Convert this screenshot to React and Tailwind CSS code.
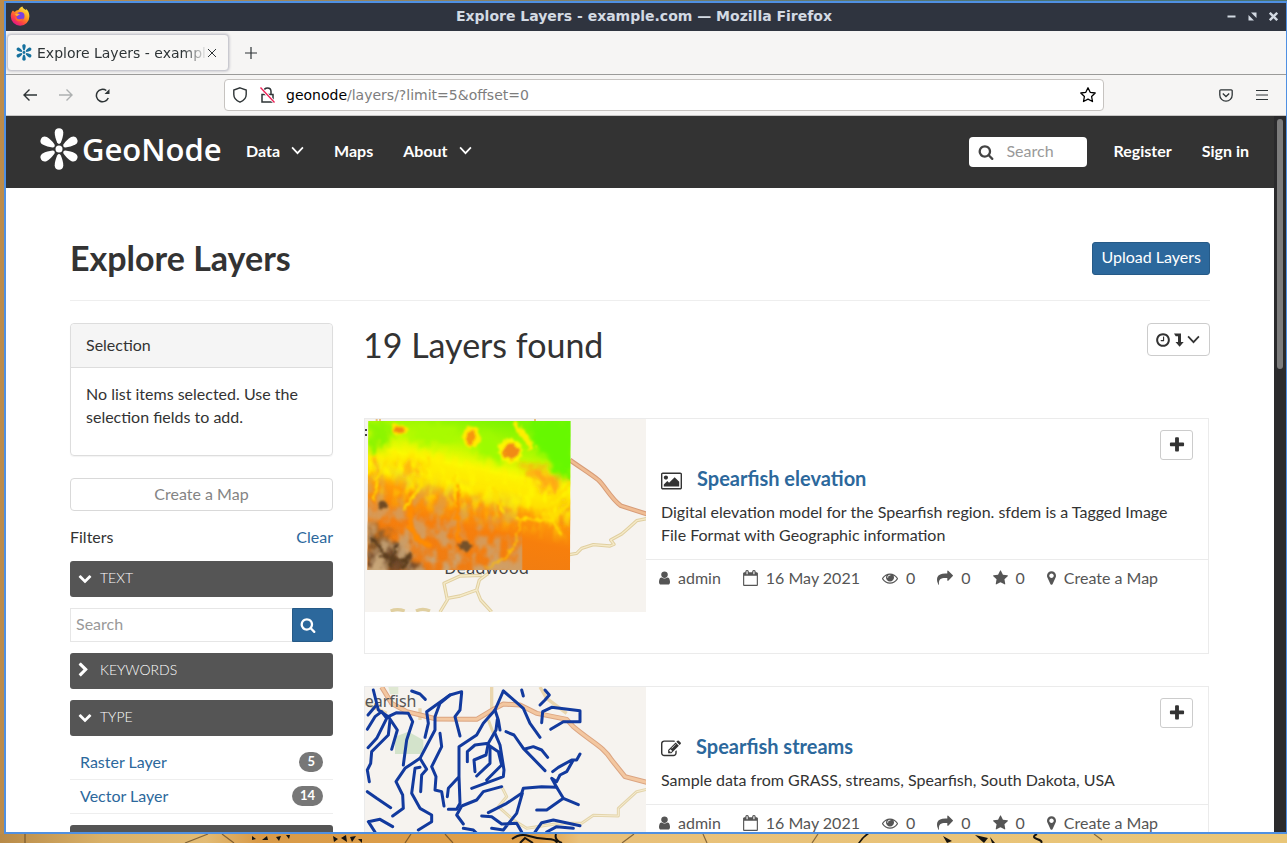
import React from 'react';

const ICONS = {
  search: ['0 0 1792 1792', 'M1216 832q0-185-131.5-316.5t-316.5-131.5-316.5 131.5-131.5 316.5 131.5 316.5 316.5 131.5 316.5-131.5 131.5-316.5zm512 832q0 52-38 90t-90 38q-54 0-90-38l-343-342q-179 124-399 124-143 0-273.5-55.5t-225-150-150-225-55.5-273.5 55.5-273.5 150-225 225-150 273.5-55.5 273.5 55.5 225 150 150 225 55.5 273.5q0 220-124 399l343 343q37 37 37 90z'],
  user: ['256 0 1280 1792', 'M1536 1399q0 109-62.5 187t-150.5 78h-854q-88 0-150.5-78t-62.5-187q0-85 8.5-160.5t31.5-152 58.5-131 94-89 134.5-34.5q131 128 313 128t313-128q76 0 134.5 34.5t94 89 58.5 131 31.5 152 8.5 160.5zm-256-887q0 159-112.5 271.5t-271.5 112.5-271.5-112.5-112.5-271.5 112.5-271.5 271.5-112.5 271.5 112.5 112.5 271.5z'],
  calendar: ['64 0 1664 1792', 'M192 1664h1408v-1024h-1408v1024zm384-1216v-288q0-14-9-23t-23-9h-64q-14 0-23 9t-9 23v288q0 14 9 23t23 9h64q14 0 23-9t9-23zm768 0v-288q0-14-9-23t-23-9h-64q-14 0-23 9t-9 23v288q0 14 9 23t23 9h64q14 0 23-9t9-23zm384-64v1280q0 52-38 90t-90 38h-1408q-52 0-90-38t-38-90v-1280q0-52 38-90t90-38h128v-96q0-66 47-113t113-47h64q66 0 113 47t47 113v96h384v-96q0-66 47-113t113-47h64q66 0 113 47t47 113v96h128q52 0 90 38t38 90z'],
  eye: ['0 0 1792 1792', 'M1664 960q-152-236-381-353 61 104 61 225 0 185-131.5 316.5t-316.5 131.5-316.5-131.5-131.5-316.5q0-121 61-225-229 117-381 353 133 205 333.5 326.5t434.5 121.5 434.5-121.5 333.5-326.5zm-720-384q0-20-14-34t-34-14q-125 0-214.5 89.5t-89.5 214.5q0 20 14 34t34 14 34-14 14-34q0-86 61-147t147-61q20 0 34-14t14-34zm848 384q0 34-20 69-140 230-376.5 368.5t-499.5 138.5-499.5-139-376.5-368q-20-35-20-69t20-69q140-229 376.5-368t499.5-139 499.5 139 376.5 368q20 35 20 69z'],
  share: ['0 0 1792 1792', 'M1792 640q0 26-19 45l-512 512q-19 19-45 19t-45-19-19-45v-256h-224q-98 0-175.5 6t-154 21.5-133 42.5-105.5 69.5-80 101-48.5 138.5-17.5 181q0 55 5 123 0 6 2.5 23.5t2.5 26.5q0 15-8.5 25t-23.5 10q-16 0-28-17-7-9-13-22t-13.5-30-10.5-24q-127-285-127-451 0-199 53-333 162-403 875-403h224v-256q0-26 19-45t45-19 45 19l512 512q19 19 19 45z'],
  star: ['64 0 1664 1792', 'M1728 647q0 22-26 48l-363 354 86 500q1 7 1 20 0 21-10.5 35.5t-30.5 14.5q-19 0-40-12l-449-236-449 236q-22 12-40 12-21 0-31.5-14.5t-10.5-35.5q0-6 2-20l86-500-364-354q-25-27-25-48 0-37 56-46l502-73 225-455q19-41 49-41t49 41l225 455 502 73q56 9 56 46z'],
  marker: ['384 0 1024 1792', 'M1152 640q0-106-75-181t-181-75-181 75-75 181 75 181 181 75 181-75 75-181zm256 0q0 109-33 179l-364 774q-16 33-47.5 52t-67.5 19-67.5-19-46.5-52l-365-774q-33-70-33-179 0-212 150-362t362-150 362 150 150 362z'],
  plus: ['0 0 1792 1792', 'M1600 736v192q0 40-28 68t-68 28h-416v416q0 40-28 68t-68 28h-192q-40 0-68-28t-28-68v-416h-416q-40 0-68-28t-28-68v-192q0-40 28-68t68-28h416v-416q0-40 28-68t68-28h192q40 0 68 28t28 68v416h416q40 0 68 28t28 68z'],
  picture: ['-64 0 1920 1792', 'M576 576q0 80-56 136t-136 56-136-56-56-136 56-136 136-56 136 56 56 136zm1024 384v448h-1408v-192l320-320 160 160 512-512zm96-704h-1600q-13 0-22.5 9.5t-9.5 22.5v1216q0 13 9.5 22.5t22.5 9.5h1600q13 0 22.5-9.5t9.5-22.5v-1216q0-13-9.5-22.5t-22.5-9.5zm160 32v1216q0 66-47 113t-113 47h-1600q-66 0-113-47t-47-113v-1216q0-66 47-113t113-47h1600q66 0 113 47t47 113z'],
  edit: ['0 0 1792 1792', 'M888 1184l116-116-152-152-116 116v56h96v96h56zm440-720q-16-16-33 1l-350 350q-17 17-1 33t33-1l350-350q17-17 1-33zm80 594v190q0 119-84.5 203.5t-203.5 84.5h-832q-119 0-203.5-84.5t-84.5-203.5v-832q0-119 84.5-203.5t203.5-84.5h832q63 0 117 25 15 7 18 23 3 17-9 29l-49 49q-14 14-32 8-23-6-45-6h-832q-66 0-113 47t-47 113v832q0 66 47 113t113 47h832q66 0 113-47t47-113v-126q0-13 9-22l64-64q15-15 35-7t20 29zm-96-738l288 288-672 672h-288v-288zm444 132l-92 92-288-288 92-92q28-28 68-28t68 28l152 152q28 28 28 68t-28 68z'],
  clock: ['128 0 1536 1792', 'M1024 544v448q0 14-9 23t-23 9h-320q-14 0-23-9t-9-23v-64q0-14 9-23t23-9h224v-352q0-14 9-23t23-9h64q14 0 23 9t9 23zm416 352q0-148-73-273t-198-198-273-73-273 73-198 198-73 273 73 273 198 198 273 73 273-73 198-198 73-273zm224 0q0 209-103 385.5t-279.5 279.5-385.5 103-385.5-103-279.5-279.5-103-385.5 103-385.5 279.5-279.5 385.5-103 385.5 103 279.5 279.5 103 385.5z'],
  down: ['0 0 1792 1792', 'M1683 808l-742 741q-19 19-45 19t-45-19l-742-741q-19-19-19-45.5t19-45.5l166-165q19-19 45-19t45 19l531 531 531-531q19-19 45-19t45 19l166 165q19 19 19 45.5t-19 45.5z'],
  right: ['256 0 1280 1792', 'M1363 877l-742 742q-19 19-45 19t-45-19l-166-166q-19-19-19-45t19-45l531-531-531-531q-19-19-19-45t19-45l166-166q19-19 45-19t45 19l742 742q19 19 19 45t-19 45z'],
};

function Icon({ name, className }) {
  const [box, d] = ICONS[name];
  return (
    <svg viewBox={box} className={'shrink-0 fill-current ' + className} aria-hidden="true">
      <path d={d} />
    </svg>
  );
}

function Caret() {
  return (
    <svg viewBox="0 0 14 10" className="h-[9px] w-[13px] shrink-0" fill="none" stroke="currentColor" strokeWidth="1.9" aria-hidden="true">
      <path d="M1 1.500 7 8l6-6.500" />
    </svg>
  );
}

function Flower({ className }) {
  return (
    <svg viewBox="0 0 40 42" className={className} fill="currentColor" aria-hidden="true">
      <circle cx="20" cy="21" r="3.500" />
      {[0, 60, 120, 180, 240, 300].map((a) => (
        <path key={a} transform={`rotate(${a} 20 21)`} d="M18.100 14.600C16.800 11.500 15.700 8 15.700 4.600 15.700 1.800 17.500.3 20 .3s4.300 1.500 4.300 4.300c0 3.400-1.100 6.900-2.400 10q-1.900 2.600-3.800 0z" />
      ))}
    </svg>
  );
}

function FirefoxIcon() {
  return (
    <svg viewBox="0 0 20 20" className="size-[20px]" aria-hidden="true">
      <defs>
        <linearGradient id="fox" x1="0.85" y1="0.1" x2="0.25" y2="0.95">
          <stop offset="0" stopColor="#ffe83d" />
          <stop offset="0.4" stopColor="#ff9a1f" />
          <stop offset="0.7" stopColor="#ff4a3d" />
          <stop offset="1" stopColor="#e31587" />
        </linearGradient>
      </defs>
      <path d="M3 4.500c.6.900 1.300 1.200 2 1.200.900-.800 2-1.500 3.500-1.700C9 3 10.500 1 12.500.5c0 2 2.700 2.800 3.700 3.800 0-.8-.2-1.200-.5-1.700 2.300 1.700 3.700 4.600 3.700 7.700a9.300 9.300 0 0 1-18.600.2C.7 8 1.500 5.700 3 4.500z" fill="url(#fox)" />
      <circle cx="10.500" cy="10" r="4" fill="#7b41e0" />
      <path d="M5 8c2-1 3.500-.5 5 .6-1.500.3-2 1-3 1.700C6.500 10 5.500 9 5 8z" fill="#ffb02e" />
      <path d="M5.500 10.500c1 3 4 3.500 7.500 2-1 4-8 4-7.500-2z" fill="#ff6a2b" />
    </svg>
  );
}

function Browser() {
  return (
    <div className="shrink-0 font-['DejaVu_Sans',sans-serif]">
      <div className="flex h-7 items-center bg-[#2f343f] px-1 pb-0.5 text-[#d3dae3]">
        <div className="flex flex-1"><FirefoxIcon /></div>
        <div className="text-[14px] font-bold">Explore Layers - example.com — Mozilla Firefox</div>
        <div className="flex flex-1 items-center justify-end gap-3 pr-1">
          <button aria-label="Minimize">
            <svg viewBox="0 0 9 9" className="size-[9px]"><path d="M0.500 3.500h8v2h-8z" fill="currentColor" /></svg>
          </button>
          <button aria-label="Restore">
            <svg viewBox="0 0 9 9" className="size-[9px]" fill="currentColor"><path d="M3 .5H8.500V6zM.5 3 6 8.500H.5z" /></svg>
          </button>
          <button aria-label="Close">
            <svg viewBox="0 0 9 9" className="size-[9px]" stroke="currentColor" strokeWidth="2.400"><path d="m.8.8 7.400 7.400M8.200.8.8 8.200" /></svg>
          </button>
        </div>
      </div>
      <div className="flex h-11 items-center gap-4 border-b border-[#9b9b99] bg-[#f6f5f4] px-px text-[#2e3436]">
        <div className="flex h-[37px] w-[222px] items-center rounded border border-[#c9c9d0] bg-[#f8f7f6] pr-3 pl-2 shadow-[0_0_3px_rgba(90,90,110,0.45)]">
          <Flower className="h-[17px] w-4 shrink-0 text-[#16719e]" />
          <span className="ml-[5px] min-w-0 flex-1 overflow-hidden mask-r-from-85% pt-px text-[14px] whitespace-nowrap">Explore Layers - example.com</span>
          <button aria-label="Close tab">
            <svg viewBox="0 0 8 8" className="size-2" stroke="currentColor" strokeWidth="1"><path d="m0 0 8 8M8 0 0 8" /></svg>
          </button>
        </div>
        <button aria-label="New tab">
          <svg viewBox="0 0 12 12" className="size-3" stroke="currentColor" strokeWidth="1.200"><path d="M6 0v12M0 6h12" /></svg>
        </button>
      </div>
      <div className="flex h-[41px] items-center border-b border-[#c8c7c6] bg-[#f6f5f4] text-[#2e3436]">
        <div className="flex w-[218px] shrink-0 items-center gap-[22px] pl-[17px]">
          <button aria-label="Back">
            <svg viewBox="0 0 14 12" className="h-3 w-[14px]" fill="none" stroke="currentColor" strokeWidth="1.400"><path d="M14 6H1M6.500.5 1 6l5.500 5.500" /></svg>
          </button>
          <button aria-label="Forward" className="text-[#adb0b0]">
            <svg viewBox="0 0 14 12" className="h-3 w-[14px]" fill="none" stroke="currentColor" strokeWidth="1.400"><path d="M0 6h13M7.500.5 13 6l-5.500 5.500" /></svg>
          </button>
          <button aria-label="Reload">
            <svg viewBox="0 0 15 15" className="size-[15px]" fill="none" stroke="currentColor" strokeWidth="1.500"><path d="M11.300 2.500A6.200 6.200 0 1 0 13.300 10" /><path d="M14.500 1v5H9.500z" fill="currentColor" stroke="none" /></svg>
          </button>
        </div>
        <div className="flex h-8 min-w-0 flex-1 items-center rounded border border-[#c6c3c0] bg-white pr-[7px] pl-2">
          <svg viewBox="0 0 14 16" className="mr-[13px] h-4 w-[14px] shrink-0" fill="none" stroke="currentColor" strokeWidth="1.400"><path d="M7 .8 13.200 3v4.500c0 3.500-2.500 6.200-6.200 7.700C3.300 13.700.8 11 .8 7.500V3z" /></svg>
          <svg viewBox="0 0 15 16" className="mr-[11px] h-4 w-[15px] shrink-0" fill="none" stroke="currentColor" strokeWidth="1.500"><path d="M4 6V4.500C4 2.500 5.500 1 7.500 1S11 2.500 11 4.500V7M2 7.500h11v7.500H2z" /><path d="M.5 .5l14 15" stroke="#fff" strokeWidth="3" /><path d="M.5 .5l14 15" stroke="#ee1f55" strokeWidth="1.300" /></svg>
          <div className="min-w-0 flex-1 text-[14px] text-[#7d7d7d]"><span className="text-black">geonode</span>/layers/?limit=5&amp;offset=0</div>
          <button aria-label="Bookmark" className="text-black">
            <svg viewBox="0 0 16 16" className="size-4" fill="none" stroke="currentColor" strokeWidth="1.300" strokeLinejoin="round"><path d="m8 .8 2.200 4.500 5 .7-3.600 3.500.900 5L8 12.200l-4.500 2.300.900-5L.8 6l5-.7z" /></svg>
          </button>
        </div>
        <div className="flex w-[182px] shrink-0 items-center justify-end gap-[23px] pr-[18px]">
          <button aria-label="Save to Pocket">
            <svg viewBox="0 0 14 13" className="h-[13px] w-[14px]" fill="none" stroke="currentColor" strokeWidth="1.300"><path d="M1.800.8h10.400a1 1 0 0 1 1 1v4.200a6.200 6.200 0 0 1-12.400 0V1.800a1 1 0 0 1 1-1z" /><path d="M3.800 4.500 7 7.500l3.200-3" /></svg>
          </button>
          <button aria-label="Menu">
            <svg viewBox="0 0 12 12" className="size-3" stroke="currentColor" strokeWidth="1.200"><path d="M0 1.500h12M0 6h12M0 10.500h12" /></svg>
          </button>
        </div>
      </div>
    </div>
  );
}

function NavBar() {
  return (
    <header className="flex h-[72px] items-center bg-[#333] pr-[25px] pb-1 pl-[33px] font-bold text-white">
      <a href="#home" className="flex items-center gap-[3px] pb-0.5" aria-label="GeoNode">
        <Flower className="h-[42px] w-10" />
        <span className="w-[140px] font-['Open_Sans',sans-serif] text-[31px] leading-[40px] font-semibold">GeoNode</span>
      </a>
      <nav className="ml-[24px] flex gap-[30px]">
        <a href="#data" className="flex items-center gap-[11px]">Data <Caret /></a>
        <a href="#maps">Maps</a>
        <a href="#about" className="flex items-center gap-[11px]">About <Caret /></a>
      </nav>
      <div className="ml-auto flex items-center">
        <label className="mt-1 mr-[26px] flex h-[30px] w-[118px] items-center gap-3 rounded bg-white px-[9px] text-[#444]">
          <Icon name="search" className="size-4" />
          <input type="text" placeholder="Search" aria-label="Search" className="w-full min-w-0 pb-[3px] font-normal outline-none placeholder:text-[#999]" />
        </label>
        <a href="#register">Register</a>
        <a href="#signin" className="ml-[30px]">Sign in</a>
      </div>
    </header>
  );
}

function FilterBar({ open, children }) {
  return (
    <button className="mb-[11px] flex h-9 w-full items-center rounded-[3px] bg-[#555] px-2 pb-[3px] text-left text-[14px] font-light text-white uppercase">
      <span className="w-[22px]"><Icon name={open ? 'down' : 'right'} className={open ? 'size-[14px]' : 'h-4 w-[11px]'} /></span>
      {children}
    </button>
  );
}

function TypeRow({ label, count }) {
  return (
    <li className="flex h-[34px] items-center justify-between border-b border-[#eee] px-[10px] pb-[2px]">
      <a href="#type" className="text-[#2c689c]">{label}</a>
      <span className="rounded-full bg-[#777] px-2 pb-[2px] text-[13px] leading-[18px] font-bold text-white">{count}</span>
    </li>
  );
}

function Sidebar() {
  return (
    <aside className="min-w-0">
      <section className="rounded border border-[#ddd] shadow-[0_1px_1px_rgba(0,0,0,0.05)]">
        <h3 className="h-11 rounded-t border-b border-[#ddd] bg-[#f5f5f5] px-[15px] leading-[41px]">Selection</h3>
        <p className="px-[15px] pt-[14px] pb-[27px]">No list items selected. Use the selection fields to add.</p>
      </section>
      <button className="mt-[22px] block h-[33px] w-full rounded border border-[#d9d9d9] pb-[3px] text-center text-[#848484]">Create a Map</button>
      <div className="mt-[14px] mb-[13px] flex justify-between">
        <h4>Filters</h4>
        <a href="#clear" className="text-[#2c689c]">Clear</a>
      </div>
      <FilterBar open>Text</FilterBar>
      <div className="mb-[11px] flex items-end">
        <input type="text" placeholder="Search" aria-label="Search text" className="h-[34px] min-w-0 flex-1 border border-r-0 border-[#e6e6e6] px-[5px] pb-[3px] outline-none placeholder:text-[#999]" />
        <button aria-label="Run search" className="flex h-[34px] w-[41px] items-center rounded-r-[3px] border border-[#265a87] bg-[#2c689c] pl-[7px] text-white">
          <Icon name="search" className="size-4" />
        </button>
      </div>
      <FilterBar>Keywords</FilterBar>
      <FilterBar open>Type</FilterBar>
      <ul className="-mt-px mb-[11px]">
        <TypeRow label="Raster Layer" count="5" />
        <TypeRow label="Vector Layer" count="14" />
      </ul>
      <FilterBar open />
    </aside>
  );
}

const road = 'M630 150C660 172 690 190 715 210 735 228 750 262 782 287L860 312';
const trail = 'M628 434L650 430 665 415 700 404 750 408 762 403 752 390 785 372 805 355 830 332 860 326';

function ElevationMap() {
  return (
    <svg viewBox="15 27 843 579" className="h-[193px] w-[281px] shrink-0 bg-[#f6f3ef]" role="img" aria-label="Spearfish elevation">
      <defs>
        <clipPath id="ec"><path d="M25 33H632L630 480H22z" /></clipPath>
        <linearGradient id="eg" x1="0.620" y1="0" x2="0.340" y2="1">
          <stop offset="0" stopColor="#7df500" />
          <stop offset="0.180" stopColor="#b4fa00" />
          <stop offset="0.320" stopColor="#fbfb00" />
          <stop offset="0.430" stopColor="#ffdc00" />
          <stop offset="0.540" stopColor="#ff9a08" />
          <stop offset="0.700" stopColor="#f77f0c" />
          <stop offset="1" stopColor="#ee7c14" />
        </linearGradient>
        <linearGradient id="lowFade" x1="0.5" y1="0" x2="0.15" y2="1">
          <stop offset="0.350" stopColor="#000" />
          <stop offset="0.650" stopColor="#aaa" />
          <stop offset="1" stopColor="#fff" />
        </linearGradient>
        <linearGradient id="midFade" x1="0.620" y1="0" x2="0.340" y2="1">
          <stop offset="0.200" stopColor="#000" />
          <stop offset="0.420" stopColor="#fff" />
          <stop offset="0.680" stopColor="#000" />
        </linearGradient>
        <mask id="lowMask"><rect x="15" y="27" width="625" height="460" fill="url(#lowFade)" /></mask>
        <mask id="midMask"><rect x="15" y="27" width="625" height="460" fill="url(#midFade)" /></mask>
        <filter id="rough" x="-10%" y="-10%" width="120%" height="120%">
          <feGaussianBlur stdDeviation="10" result="b" />
          <feTurbulence type="fractalNoise" baseFrequency="0.035" numOctaves="4" seed="7" result="n" />
          <feDisplacementMap in="b" in2="n" scale="60" xChannelSelector="R" yChannelSelector="G" />
          <feGaussianBlur stdDeviation="4" />
        </filter>
        <filter id="fine" x="-10%" y="-10%" width="120%" height="120%">
          <feGaussianBlur stdDeviation="2" result="b" />
          <feTurbulence type="fractalNoise" baseFrequency="0.060" numOctaves="3" seed="3" result="n" />
          <feDisplacementMap in="b" in2="n" scale="22" xChannelSelector="R" yChannelSelector="G" />
          <feGaussianBlur stdDeviation="2.500" />
        </filter>
        <filter id="brownSpots">
          <feTurbulence type="fractalNoise" baseFrequency="0.026 0.018" numOctaves="4" seed="11" />
          <feColorMatrix values="0 0 0 0 0.580  0 0 0 0 0.380  0 0 0 0 0.190  4 0 0 0 -1.600" />
          <feGaussianBlur stdDeviation="3" />
        </filter>
        <filter id="yellowVeins">
          <feTurbulence type="fractalNoise" baseFrequency="0.040 0.020" numOctaves="3" seed="21" />
          <feColorMatrix values="0 0 0 0 1  0 0 0 0 0.900  0 0 0 0 0  5 0 0 0 -2.300" />
          <feGaussianBlur stdDeviation="3" />
        </filter>
      </defs>
      <path d={road} fill="none" stroke="#d79c78" strokeWidth="14" />
      <path d={road} fill="none" stroke="#f0bd94" strokeWidth="8" />
      <g fill="none" strokeLinejoin="round">
        <g stroke="#e0cfa0" strokeWidth="10">
          <path d={trail} />
          <path d="M240 606L262 570 252 520 300 498 365 496M262 565L300 558 350 540 358 510 385 490M350 540L362 570 395 606M92 603q20-8 42 0M168 603q20-10 42 0" />
        </g>
        <g stroke="#f5eac8" strokeWidth="4">
          <path d={trail} />
          <path d="M240 606L262 570 252 520 300 498 365 496M262 565L300 558 350 540 358 510 385 490M350 540L362 570 395 606" />
        </g>
      </g>
      <path d="M15 60h6M15 75h6" stroke="#444" strokeWidth="6" />
      <path d="M50 27v8M60 27v8M525 27v8" stroke="#e8c080" strokeWidth="6" />
      <text x="253" y="493" fontSize="50" fill="#444" fontFamily="Noto Sans, sans-serif">Deadwood</text>
      <g clipPath="url(#ec)">
        <rect x="20" y="30" width="616" height="454" fill="url(#eg)" />
        <g filter="url(#rough)">
          <path d="M20 35H90L100 90 60 140 20 110z" fill="#8bf500" />
          <path d="M160 45H300L290 90 200 110 150 90z" fill="#a8fb00" />
          <path d="M510 20H650V200L620 230 560 150 520 110z" fill="#66f800" />
          <path d="M370 60L420 90 440 160 380 150 330 110z" fill="#9dfb00" />
          <path d="M80 140Q200 110 300 170 450 190 560 250L640 240V300L480 300 300 240 150 220 60 190z" fill="#ffee00" opacity=".7" />
          <path d="M470 160L550 170 620 215 590 250 530 230z" fill="#ffa814" />
          <path d="M30 140L60 160 50 210 30 230z" fill="#ffae10" />
          <path d="M110 150L190 160 180 200 120 200z" fill="#ffb810" />
          <path d="M600 290L650 270V350L610 350z" fill="#f48c14" />
          <path d="M20 330L70 370 110 390 150 440 190 490H15z" fill="#8a5a2c" />
          <path d="M20 420L130 400 170 490H15z" fill="#70492a" />
        </g>
        <g mask="url(#midMask)"><rect x="15" y="27" width="625" height="460" filter="url(#yellowVeins)" /></g>
        <g mask="url(#lowMask)"><rect x="15" y="27" width="430" height="460" filter="url(#brownSpots)" /></g>
        <g filter="url(#fine)">
          <ellipse cx="118" cy="60" rx="26" ry="17" fill="#ffe800" />
          <ellipse cx="118" cy="60" rx="17" ry="10" fill="#f58a10" />
          <ellipse cx="334" cy="80" rx="27" ry="32" fill="#ffec00" />
          <ellipse cx="333" cy="84" rx="12" ry="21" fill="#f7960d" />
          <circle cx="452" cy="123" r="36" fill="#fdf600" />
          <circle cx="453" cy="124" r="24" fill="#f18a12" />
          <path d="M460 35L495 80 520 120" fill="none" stroke="#ffee00" strokeWidth="18" />
          <ellipse cx="68" cy="284" rx="13" ry="12" fill="#704a24" />
          <ellipse cx="315" cy="408" rx="17" ry="14" fill="#75512a" />
          <path d="M30 380L90 450M60 440L150 455M110 400L90 475M150 430L130 480" fill="none" stroke="#5c3c1e" strokeWidth="10" />
          <path d="M155 250L150 350 175 390 210 410M290 220L293 390" fill="none" stroke="#ff8c06" strokeWidth="13" />
          <path d="M210 140L180 230 130 300M285 190L288 290M400 230L430 310M470 325L570 330 640 270M570 310L600 370M560 285L635 215M40 270L55 200 85 150" fill="none" stroke="#ffe000" strokeWidth="8" />
          <path d="M480 330L470 390 440 440 380 475" fill="none" stroke="#ffc000" strokeWidth="7" />
        </g>
      </g>
    </svg>
  );
}

const streams = [
  'M40 30L55 90 85 110 110 98 145 100 158 125 140 180 130 255',
  'M24 105L45 80M22 148L45 110 65 95 80 115 50 175 24 203',
  'M85 110L112 150 95 208M90 120L85 165 55 195 35 215 32 250 22 270 28 305',
  'M155 33L180 42 196 58M305 35L270 45 200 95 205 130 195 172M305 38L300 90 285 110 300 168',
  'M270 45L240 70 225 110 225 150 180 235 135 265 108 305 128 345 130 385 98 408',
  'M180 235L200 268 185 285 182 335M180 262L165 265 155 340 180 385 215 405 215 425 175 450',
  'M240 160L245 200 215 260 228 290 225 330 245 335 252 378',
  'M430 33L405 90 370 130 350 165 297 200 297 290 265 325 262 350M297 290L300 370 290 388 265 388',
  'M430 33L490 85 510 130 540 172M405 90L415 120 420 150M412 118L408 150 385 190 345 195 322 215 322 245M385 190L378 225 342 240 345 275',
  'M405 160L420 195 432 270 430 290 335 325M385 195L415 215 425 255 380 300M390 200L390 250 350 288',
  'M425 320L370 335 350 360 305 378 290 405 310 432M438 155L462 165 490 205 555 272M495 207L520 200 545 210 563 232',
  'M545 128L548 95 575 82 660 92 660 125 610 125 572 148M485 30L490 48M555 30L568 45 555 60 540 75',
  'M660 222L650 240 635 240 595 262 578 275M640 240L620 275 600 285 590 305 575 295 590 322 545 320 490 325 485 340 440 370 385 398',
  'M590 322L610 355 655 374M610 355L560 390 530 390M487 340L470 400 430 450 395 445M365 408L395 410 425 432 470 430 485 456',
  'M22 335L50 355 92 383M25 425L60 418 98 440M25 425L45 456M310 445L340 450 370 480M525 456L545 428 580 420 660 437M560 456L590 440 640 445',
];

function StreamsMap() {
  return (
    <svg viewBox="15 21 843 579" className="h-[193px] w-[281px] shrink-0 bg-[#f6f3ef]" role="img" aria-label="Spearfish streams">
      <path d="M105 170L145 155 190 180V222L105 222z" fill="#d3e3cb" />
      <path d="M85 21h30v22H90z" fill="#dfe8d2" />
      <g fill="none" strokeLinejoin="round">
        <path d="M15 70L80 100M180 85V120M395 21V90L365 110M540 21L560 55 620 100" stroke="#ead6ae" strokeWidth="10" />
        <path d="M65 21L95 70 140 95 230 117 350 118 400 88 430 72 480 75 530 100 620 118 640 140C700 190 730 200 755 240L795 290 860 307" stroke="#dba481" strokeWidth="15" />
        <path d="M65 21L95 70 140 95 230 117 350 118 400 88 430 72 480 75 530 100 620 118 640 140C700 190 730 200 755 240L795 290 860 307" stroke="#f3c7a0" strokeWidth="9" />
        <path d="M385 120L400 160M425 320L440 350 415 380 460 420 500 445 600 430 665 430 700 406 775 408 775 385 830 335 860 328" stroke="#e4d5ac" strokeWidth="9" />
        <path d="M425 320L440 350 415 380 460 420 500 445 600 430 665 430 700 406 775 408 775 385 830 335 860 328" stroke="#f6ecd0" strokeWidth="3" />
      </g>
      <text x="14" y="80" fontSize="48" fill="#555" fontFamily="Noto Sans, sans-serif">earfish</text>
      <g fill="none" stroke="#123a9e" strokeWidth="9" strokeLinecap="round" strokeLinejoin="round">
        {streams.map((d) => <path key={d} d={d} />)}
      </g>
    </svg>
  );
}

function Meta({ icon, size, children }) {
  return (
    <li className="flex items-center gap-2">
      <Icon name={icon} className={size} />
      {children}
    </li>
  );
}

function LayerCard({ map, icon, iconSize, title, children }) {
  return (
    <article className="mx-px mb-8 flex min-h-[236px] items-start border border-[#ebebeb]">
      {map}
      <div className="min-w-0 flex-1">
        <div className="flex justify-end pt-[11px] pr-[15px]">
          <button aria-label={'Add ' + title} className="flex h-[30px] w-[33px] items-center justify-center rounded-[3px] border border-[#ccc] text-[#333]">
            <Icon name="plus" className="size-[18px]" />
          </button>
        </div>
        <h3 className="mt-[7px] flex h-[22px] items-center gap-[15px] px-[15px] text-[20px] leading-[22px] font-bold">
          <Icon name={icon} className={'mt-[5px] ' + iconSize} />
          <a href="#layer" className="text-[#2c689c]">{title}</a>
        </h3>
        <p className="mt-[11px] px-[15px] pb-[13px]">{children}</p>
        <ul className="flex gap-[22px] border-t border-[#ebebeb] px-[13px] pt-[6px] text-[#555]">
          <Meta icon="user" size="h-4 w-[11px]">admin</Meta>
          <Meta icon="calendar" size="h-4 w-[15px]">16 May 2021</Meta>
          <Meta icon="eye" size="size-4">0</Meta>
          <Meta icon="share" size="size-4">0</Meta>
          <Meta icon="star" size="h-4 w-[15px]">0</Meta>
          <Meta icon="marker" size="h-4 w-[9px]"><a href="#create">Create a Map</a></Meta>
        </ul>
      </div>
    </article>
  );
}

function Page() {
  return (
    <div className="min-w-0 flex-1 bg-white font-[Lato,sans-serif] text-[16px] leading-[23px] text-[#333]">
      <NavBar />
      <main className="mx-auto max-w-[1170px] px-[15px] pt-12">
        <div className="flex items-center justify-between border-b border-[#eee] pb-5">
          <h1 className="text-[34px] leading-[44px] font-bold">Explore Layers</h1>
          <button className="h-[33px] rounded-[3px] border border-[#265a87] bg-[#2c689c] px-2 pb-[3px] text-white">Upload Layers</button>
        </div>
        <div className="mt-[22px] grid grid-cols-[263px_1fr] gap-[30px]">
          <Sidebar />
          <section className="min-w-0">
            <div className="mb-[51px] flex items-start justify-between">
              <h2 className="text-[34px] leading-[44px]">19 Layers found</h2>
              <button aria-label="Sort by date" className="flex h-[33px] w-[63px] items-center gap-[3px] rounded border border-[#ccc] px-2">
                <Icon name="clock" className="h-4 w-[14px]" />
                <svg viewBox="0 0 11 14" className="h-[14px] w-[11px] shrink-0" fill="currentColor" aria-hidden="true"><path d="M1 .5h7v8.500h2.700L6.600 13.800 2.500 9h2.500V3.200H2.700z" /></svg>
                <Caret />
              </button>
            </div>
            <LayerCard map={<ElevationMap />} icon="picture" iconSize="h-5 w-[21px]" title="Spearfish elevation">
              Digital elevation model for the Spearfish region. sfdem is a Tagged Image File Format with Geographic information
            </LayerCard>
            <LayerCard map={<StreamsMap />} icon="edit" iconSize="size-5" title="Spearfish streams">
              Sample data from GRASS, streams, Spearfish, South Dakota, USA
            </LayerCard>
          </section>
        </div>
      </main>
    </div>
  );
}

function Wallpaper() {
  return (
    <svg className="block h-[9px] w-full shrink-0" viewBox="0 0 1287 9" preserveAspectRatio="none" aria-hidden="true">
      <defs>
        <linearGradient id="sand">
          <stop offset="0" stopColor="#b88a48" />
          <stop offset="0.080" stopColor="#d9b169" />
          <stop offset="0.160" stopColor="#e2bb74" />
          <stop offset="0.200" stopColor="#d89a48" />
          <stop offset="0.420" stopColor="#dfa04a" />
          <stop offset="0.450" stopColor="#e8c07a" />
          <stop offset="1" stopColor="#e9c678" />
        </linearGradient>
      </defs>
      <rect width="1287" height="9" fill="url(#sand)" />
      <g fill="none" stroke="#5a4020" strokeWidth="1.200" opacity=".7">
        <path d="M25 0V9M185 9L208 0M222 0l12 9M405 9l6-9M445 0l8 9M622 9l12-9M703 0l4 9M812 9l6-9M1094 0l8 6" />
      </g>
      <g fill="#17130d">
        <path d="M252 2l4 3-4 1zM262 6l5-4 1 4zM276 3l5-1-2 5zM286 1l4 0-1 4zM333 2l5 3-4 3zM341 4l5-3 1 7zM350 3l6-1-4 6zM358 5l4 0v4zM943 2l9 5-5 2zM975 1l13 3-4 5zM990 3l5 6h-3zM860 9q4-6 9-9h-3q-5 4-8 9z" />
      </g>
      <g fill="none" stroke="#17130d">
        <path d="M512 5q8-6 17-3t18 3 10 4M520 9l5-5 8 5M556 0q-2 6 6 9M1037 0q-6 3 0 5t4 4" strokeWidth="2" />
      </g>
    </svg>
  );
}

export default function App() {
  return (
    <div className="flex h-screen flex-col bg-linear-to-r from-[#bd8c4a] to-[#4a7373] to-80% pt-px">
      <div className="flex min-h-0 flex-1 pl-1">
        <div className="flex min-w-0 flex-1 flex-col overflow-hidden border-2 border-r border-[#4f90e2]">
          <Browser />
          <div className="flex min-h-0 flex-1 overflow-hidden">
            <Page />
            <div className="w-3 shrink-0 bg-[#2a2a2c] pt-[3px] pl-[3px]">
              <div className="h-[250px] w-[6px] rounded-full bg-[#7c7c7c]" />
            </div>
          </div>
        </div>
      </div>
      <Wallpaper />
    </div>
  );
}
